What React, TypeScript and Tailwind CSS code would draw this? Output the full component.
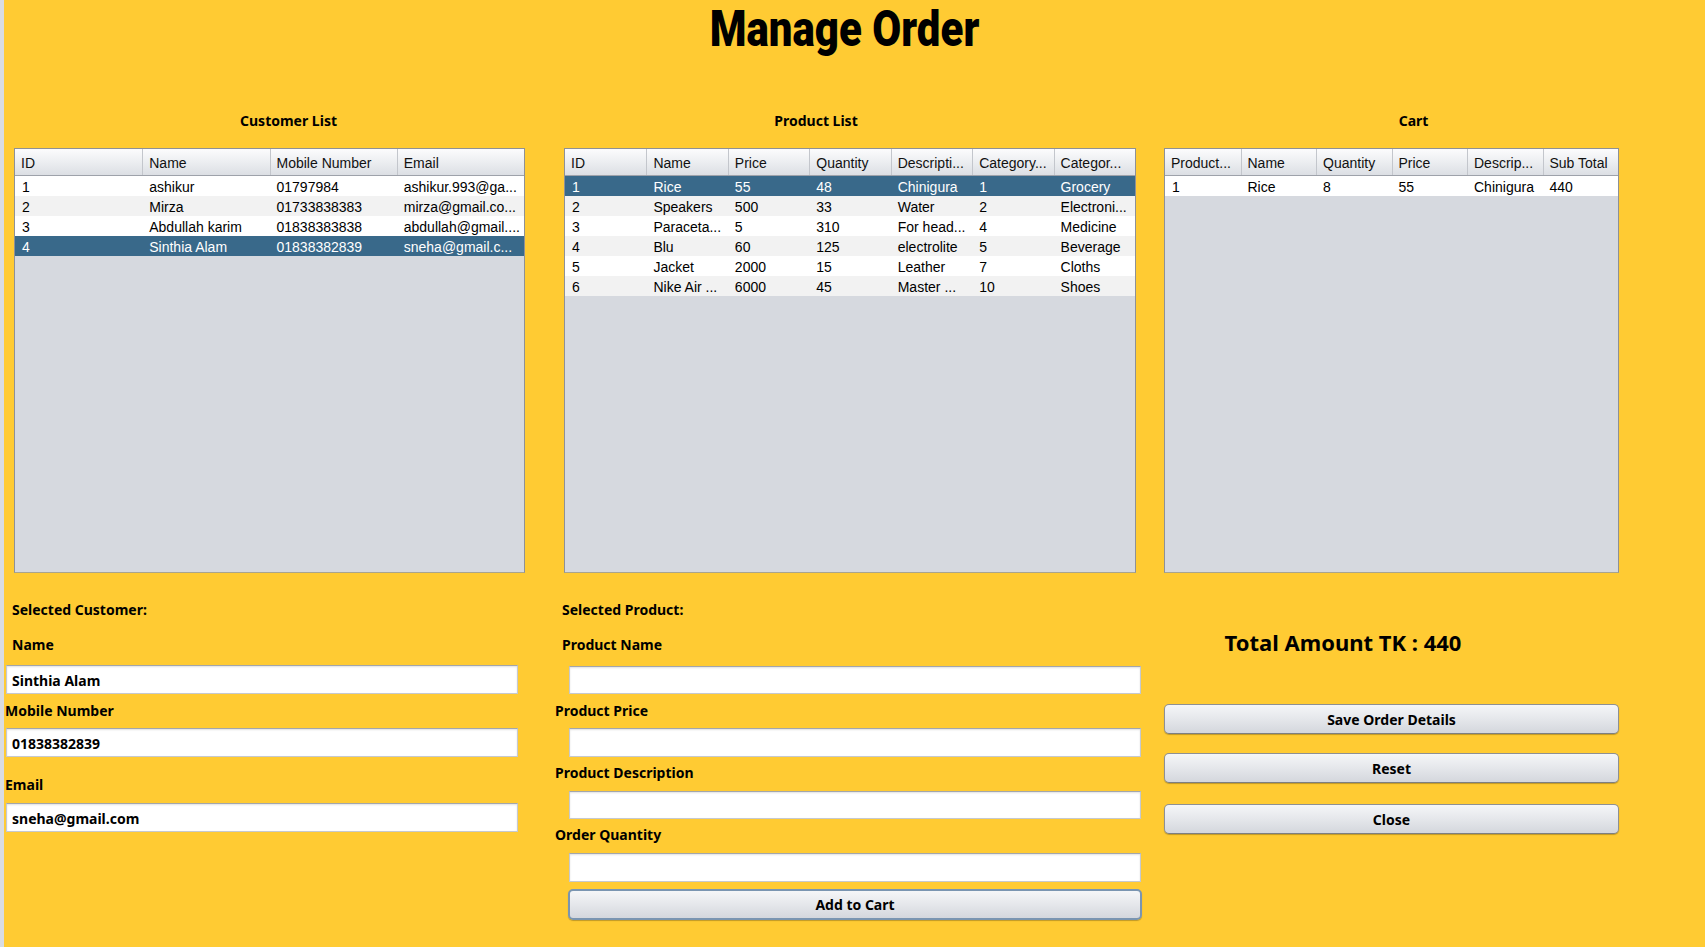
import React from "react";

const LBL = "font-['Noto_Sans',sans-serif] font-bold text-[14px] leading-[20px] h-[20px] text-black whitespace-nowrap";
const TBL = "font-['Liberation_Sans',Arial,sans-serif] text-[14px]";

type TableProps = {
  cols: string[];
  rows: string[][];
  selected?: number;
  grid: string;
  box: string;
};

function DataTable({ cols, rows, selected, grid, box }: TableProps) {
  return (
    <div className={`${box} mt-[17px] h-[425px] border border-[#8f9195] border-b-[#a9a48f] bg-[#d6d9df] flex flex-col overflow-hidden ${TBL}`}>
      <div className={`${grid} h-[27px] shrink-0 border-b border-[#9ea2aa] bg-linear-to-b from-[#fcfcfd] via-[#eceef1] to-[#dcdfe4] text-[#111]`}>
        {cols.map((c, i) => (
          <div
            key={i}
            className={`flex items-center pl-[6px] pt-[2px] whitespace-nowrap overflow-hidden ${i > 0 ? "border-l border-[#c3c6cc]" : ""}`}
          >
            {c}
          </div>
        ))}
      </div>
      {rows.map((r, ri) => (
        <div
          key={ri}
          className={`${grid} h-[20px] shrink-0 ${
            ri === selected ? "bg-[#39698a] text-white" : ri % 2 === 0 ? "bg-white text-black" : "bg-[#f2f2f2] text-black"
          }`}
        >
          {r.map((c, ci) => (
            <div key={ci} className="flex items-center pl-[7px] pt-[2px] whitespace-nowrap overflow-hidden">
              {c}
            </div>
          ))}
        </div>
      ))}
    </div>
  );
}

function Field({ cls, value }: { cls: string; value?: string }) {
  return (
    <div
      className={`${cls} bg-white border border-[#c6c9ce] border-t-[#a3a6ab] shadow-[inset_0_1px_2px_rgba(0,0,0,0.12)] flex items-center pl-[5px] pt-[1px] font-['Noto_Sans',sans-serif] font-bold text-[14px] text-black`}
    >
      {value}
    </div>
  );
}

function Btn({ cls, label, focus }: { cls: string; label: string; focus?: boolean }) {
  return (
    <div
      className={`${cls} rounded-[5px] ${
        focus ? "border-2 border-[#7a95b1]" : "border border-[#8e9093] border-b-[#7d7f82]"
      } bg-linear-to-b from-[#f5f6f8] via-[#e5e7eb] to-[#d4d7dd] shadow-[0_1px_1px_rgba(0,0,0,0.25)] flex items-center justify-center font-['Noto_Sans',sans-serif] font-bold text-[14px] text-black`}
    >
      {label}
    </div>
  );
}

export default function App() {
  const customerRows = [
    ["1", "ashikur", "01797984", "ashikur.993@ga..."],
    ["2", "Mirza", "01733838383", "mirza@gmail.co..."],
    ["3", "Abdullah karim", "01838383838", "abdullah@gmail...."],
    ["4", "Sinthia Alam", "01838382839", "sneha@gmail.c..."],
  ];
  const productRows = [
    ["1", "Rice", "55", "48", "Chinigura", "1", "Grocery"],
    ["2", "Speakers", "500", "33", "Water", "2", "Electroni..."],
    ["3", "Paraceta...", "5", "310", "For head...", "4", "Medicine"],
    ["4", "Blu", "60", "125", "electrolite", "5", "Beverage"],
    ["5", "Jacket", "2000", "15", "Leather", "7", "Cloths"],
    ["6", "Nike Air ...", "6000", "45", "Master ...", "10", "Shoes"],
  ];
  const cartRows = [["1", "Rice", "8", "55", "Chinigura", "440"]];

  return (
    <div className="w-full h-[947px] overflow-hidden flex bg-[#ffcb33]">
      <div className="w-[4px] shrink-0 bg-[#d9dce2]" />
      <div className="flex-1 flex flex-col">
        <div className="h-[58px] pt-[4px] flex justify-center pr-[20px]">
          <div className="font-['Roboto',sans-serif] font-black text-[50px] leading-[50px] text-black scale-x-[0.84] whitespace-nowrap">
            Manage Order
          </div>
        </div>

        <div className="mt-[53px] flex">
          {/* Customer column */}
          <div className="w-[521px] shrink-0 flex flex-col">
            <div className={`w-[569px] flex justify-center ${LBL}`}>Customer List</div>
            <DataTable
              cols={["ID", "Name", "Mobile Number", "Email"]}
              rows={customerRows}
              selected={3}
              grid="grid grid-cols-4"
              box="ml-[10px] w-[511px]"
            />
            <div className={`mt-[27px] pl-[8px] ${LBL}`}>Selected Customer:</div>
            <div className={`mt-[15px] pl-[8px] ${LBL}`}>Name</div>
            <Field cls="mt-[10px] ml-[2px] w-[512px] h-[29px]" value="Sinthia Alam" />
            <div className={`mt-[7px] pl-[1px] ${LBL}`}>Mobile Number</div>
            <Field cls="mt-[7px] ml-[2px] w-[512px] h-[29px]" value="01838382839" />
            <div className={`mt-[18px] pl-[1px] ${LBL}`}>Email</div>
            <Field cls="mt-[8px] ml-[2px] w-[512px] h-[29px]" value="sneha@gmail.com" />
          </div>

          {/* Product column */}
          <div className="ml-[29px] w-[588px] shrink-0 flex flex-col">
            <div className={`w-[524px] flex justify-center ${LBL}`}>Product List</div>
            <DataTable
              cols={["ID", "Name", "Price", "Quantity", "Descripti...", "Category...", "Categor..."]}
              rows={productRows}
              selected={0}
              grid="grid grid-cols-7"
              box="ml-[10px] w-[572px]"
            />
            <div className={`mt-[27px] pl-[8px] ${LBL}`}>Selected Product:</div>
            <div className={`mt-[15px] pl-[8px] ${LBL}`}>Product Name</div>
            <Field cls="mt-[11px] ml-[15px] w-[572px] h-[28px]" />
            <div className={`mt-[7px] pl-[1px] ${LBL}`}>Product Price</div>
            <Field cls="mt-[7px] ml-[15px] w-[572px] h-[29px]" />
            <div className={`mt-[6px] pl-[1px] ${LBL}`}>Product Description</div>
            <Field cls="mt-[8px] ml-[15px] w-[572px] h-[28px]" />
            <div className={`mt-[6px] pl-[1px] ${LBL}`}>Order Quantity</div>
            <Field cls="mt-[8px] ml-[15px] w-[572px] h-[29px]" />
            <Btn cls="mt-[7px] ml-[14px] w-[574px] h-[31px]" label="Add to Cart" focus />
          </div>

          {/* Cart column */}
          <div className="ml-[21px] w-[456px] shrink-0 flex flex-col">
            <div className={`w-[501px] flex justify-center ${LBL}`}>Cart</div>
            <DataTable
              cols={["Product...", "Name", "Quantity", "Price", "Descrip...", "Sub Total"]}
              rows={cartRows}
              grid="grid grid-cols-6"
              box="ml-[1px] w-[455px]"
            />
            <div className="mt-[54px] w-[360px] h-[30px] flex justify-center font-['Noto_Sans',sans-serif] font-bold text-[22px] leading-[30px] text-black whitespace-nowrap">
              Total Amount TK : 440
            </div>
            <Btn cls="mt-[47px] ml-[1px] w-[455px] h-[30px]" label="Save Order Details" />
            <Btn cls="mt-[19px] ml-[1px] w-[455px] h-[30px]" label="Reset" />
            <Btn cls="mt-[21px] ml-[1px] w-[455px] h-[30px]" label="Close" />
          </div>
        </div>
      </div>
    </div>
  );
}
